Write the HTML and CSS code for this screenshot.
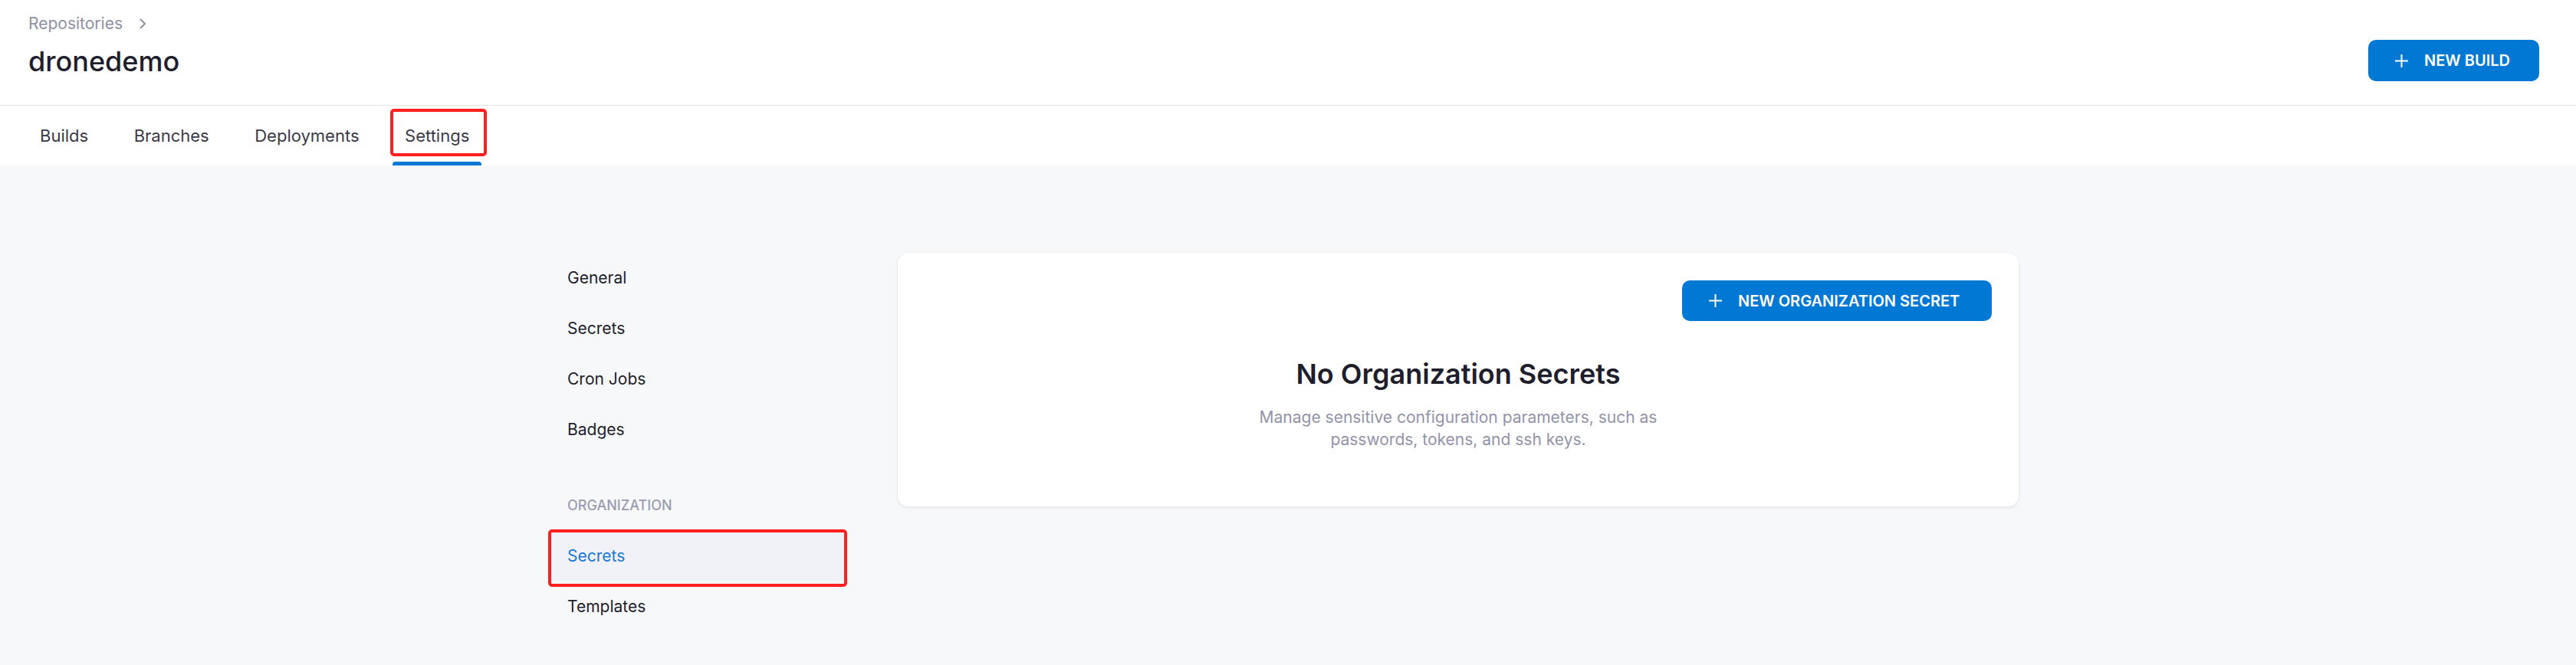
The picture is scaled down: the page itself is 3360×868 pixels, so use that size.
FILE: index.html
```html
<!DOCTYPE html>
<html lang="en">
<head>
<meta charset="utf-8">
<title>dronedemo - Settings</title>
<link rel="stylesheet" href="styles.css">
</head>
<body>
<header class="header">
  <div class="header-top">
    <div class="header-titles">
      <div class="crumbs">
        <span class="crumb">Repositories</span>
        <svg class="chevron" width="9" height="14" viewBox="0 0 9 14"><polyline points="1.5,1.5 7,7 1.5,12.5" fill="none" stroke="#8e90a6" stroke-width="2" stroke-linecap="round" stroke-linejoin="round"/></svg>
      </div>
      <h1 class="repo-name">dronedemo</h1>
    </div>
    <button class="btn btn-build">
      <svg class="plus" width="19" height="19" viewBox="0 0 19 19"><path d="M9.5 1v17M1 9.5h17" stroke="#fff" stroke-width="2" fill="none"/></svg>
      <span>NEW BUILD</span>
    </button>
  </div>
  <nav class="tabs">
    <a class="tab">Builds</a>
    <a class="tab">Branches</a>
    <a class="tab">Deployments</a>
    <a class="tab tab-active">Settings<span class="mark mark-tab"></span></a>
  </nav>
</header>
<main class="main">
  <div class="container">
    <aside class="side">
      <a class="side-item">General</a>
      <a class="side-item">Secrets</a>
      <a class="side-item">Cron Jobs</a>
      <a class="side-item">Badges</a>
      <div class="side-header">ORGANIZATION</div>
      <a class="side-item side-active">Secrets<span class="mark mark-side"></span></a>
      <a class="side-item">Templates</a>
    </aside>
    <section class="card">
      <div class="card-actions">
        <button class="btn btn-secret">
          <svg class="plus" width="19" height="19" viewBox="0 0 19 19"><path d="M9.5 1v17M1 9.5h17" stroke="#fff" stroke-width="2" fill="none"/></svg>
          <span>NEW ORGANIZATION SECRET</span>
        </button>
      </div>
      <div class="empty">
        <h2 class="empty-title">No Organization Secrets</h2>
        <p class="empty-text">Manage sensitive configuration parameters, such as<br>passwords, tokens, and ssh keys.</p>
      </div>
    </section>
  </div>
</main>
</body>
</html>
```
FILE: styles.css
```css
* { box-sizing: border-box; }
html, body { margin: 0; padding: 0; }
body {
  font-family: Inter, "Noto Sans", "Liberation Sans", sans-serif;
  background: #f7f8fa;
  color: #1e1e2c;
  min-height: 868px;
}
.header { background: #fff; }
.header-top {
  height: 138px;
  border-bottom: 1px solid #e4e5ea;
  display: flex;
  justify-content: space-between;
  align-items: flex-start;
  padding: 0 48px 0 37px;
}
.header-titles { padding-top: 16px; }
.crumbs {
  display: flex;
  align-items: center;
  height: 30px;
  gap: 22px;
}
.crumb { font-size: 21px; color: #8e90a6; line-height: 30px; }
.chevron { display: block; }
.repo-name {
  margin: 12px 0 0;
  font-size: 36px;
  font-weight: 500;
  line-height: 44px;
  color: #1e1e2c;
}
.btn {
  display: flex;
  align-items: center;
  border: none;
  background: #0278d5;
  color: #fff;
  font-family: inherit;
  font-weight: 600;
  font-size: 20px;
  white-space: nowrap;
  border-radius: 10px;
  height: 54px;
  padding: 0 0 0 34px;
  gap: 20px;
}
.btn-build { margin-top: 52px; width: 223px; }
.btn-secret { height: 53px; width: 404px; }
.plus { display: block; flex: none; }
.tabs {
  display: flex;
  height: 78px;
  padding-left: 36px;
  gap: 27.5px;
}
.tab {
  position: relative;
  display: flex;
  align-items: center;
  padding: 0 16px;
  font-size: 22px;
  color: #3a3a48;
}
.tab-active::after {
  content: "";
  position: absolute;
  left: 0; right: 0; bottom: 0;
  height: 5px;
  background: #0278d5;
  border-radius: 4px 4px 0 0;
}
.mark {
  position: absolute;
  border: 4px solid #ff1f1f;
  border-radius: 5px;
  pointer-events: none;
}
.mark-tab { left: -3px; right: -7px; top: 4px; bottom: 12px; }
.main { padding-top: 113px; }
.container {
  width: 1920px;
  margin: 0 auto;
  display: flex;
  gap: 70px;
  align-items: flex-start;
}
.side { width: 380px; display: flex; flex-direction: column; }
.side-item {
  position: relative;
  height: 66px;
  display: flex;
  align-items: center;
  padding-left: 20px;
  font-size: 21px;
  color: #1e1e2c;
}
.side-active { background: #f1f2f7; color: #1a78d6; }
.mark-side { left: -5px; right: -5px; top: -1px; bottom: -8px; }
.side-header {
  height: 99px;
  padding: 54px 0 0 20px;
  font-size: 18px;
  line-height: 26px;
  color: #9a9cb2;
  font-weight: 500;
}
.card {
  width: 1464px;
  background: #fff;
  border: 1px solid #eceef2;
  border-radius: 15px;
  box-shadow: 0 2px 3px rgba(30, 30, 60, 0.06);
  padding: 36px 35px 0 0;
  height: 333px;
}
.card-actions { display: flex; justify-content: flex-end; }
.empty { text-align: center; margin-right: -35px; }
.empty-title {
  margin: 47px 0 0;
  font-size: 36px;
  font-weight: 600;
  line-height: 44px;
  color: #1e1e2c;
}
.empty-text {
  margin: 20px 0 0;
  font-size: 21px;
  line-height: 29px;
  color: #9293ab;
}
```
